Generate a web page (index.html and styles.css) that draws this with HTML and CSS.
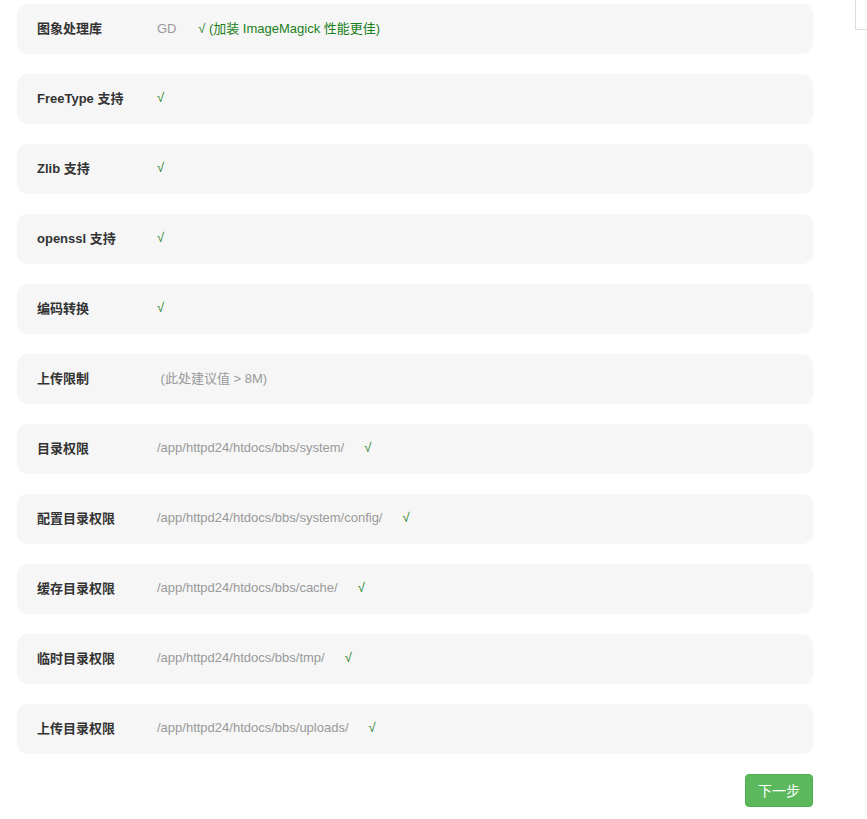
FILE: index.html
```html
<!DOCTYPE html>
<html lang="zh-CN">

<head>
    <meta charset="UTF-8">
    <title>环境检测</title>
    <link rel="stylesheet" href="styles.css">
</head>

<body>

    <div class="side-box"></div>

    <div class="check-list">
        <div class="row">
            <div class="label">图象处理库</div>
            <div class="value">GD&nbsp;&nbsp;&nbsp;&nbsp;&nbsp; <span class="ok">√ (加装 ImageMagick 性能更佳)</span></div>
        </div>
        <div class="row">
            <div class="label">FreeType 支持</div>
            <div class="value"><span class="ok">√</span></div>
        </div>
        <div class="row">
            <div class="label">Zlib 支持</div>
            <div class="value"><span class="ok">√</span></div>
        </div>
        <div class="row">
            <div class="label">openssl 支持</div>
            <div class="value"><span class="ok">√</span></div>
        </div>
        <div class="row">
            <div class="label">编码转换</div>
            <div class="value"><span class="ok">√</span></div>
        </div>
        <div class="row">
            <div class="label">上传限制</div>
            <div class="value">&nbsp;(此处建议值 &gt; 8M)</div>
        </div>
        <div class="row">
            <div class="label">目录权限</div>
            <div class="value">/app/httpd24/htdocs/bbs/system/<span class="ok gap">√</span></div>
        </div>
        <div class="row">
            <div class="label">配置目录权限</div>
            <div class="value">/app/httpd24/htdocs/bbs/system/config/<span class="ok gap">√</span></div>
        </div>
        <div class="row">
            <div class="label">缓存目录权限</div>
            <div class="value">/app/httpd24/htdocs/bbs/cache/<span class="ok gap">√</span></div>
        </div>
        <div class="row">
            <div class="label">临时目录权限</div>
            <div class="value">/app/httpd24/htdocs/bbs/tmp/<span class="ok gap">√</span></div>
        </div>
        <div class="row">
            <div class="label">上传目录权限</div>
            <div class="value">/app/httpd24/htdocs/bbs/uploads/<span class="ok gap">√</span></div>
        </div>

        <div class="actions">
            <button class="button">下一步</button>
        </div>
    </div>

</body>

</html>
```

FILE: styles.css
```css
* {
    box-sizing: border-box;
}

body {
    margin: 0;
    padding: 4px 0 0 17px;
    font-family: "Liberation Sans", Arial, "Noto Sans CJK SC", sans-serif;
    font-size: 13px;
    background-color: #fff;
    color: #333;
}

.side-box {
    position: absolute;
    top: -1px;
    left: 855px;
    width: 30px;
    height: 31px;
    border: 1px solid #ddd;
}

.check-list {
    width: 796px;
    display: flex;
    flex-direction: column;
    gap: 20px;
}

.row {
    display: flex;
    align-items: center;
    height: 50px;
    padding: 0 20px 4px;
    background-color: #f6f6f6;
    border-radius: 10px;
}

.label {
    width: 120px;
    flex-shrink: 0;
    font-weight: bold;
    color: #333;
}

.value {
    color: #999;
}

.ok {
    color: #1a801a;
}

.gap {
    margin-left: 20px;
}

.actions {
    display: flex;
    justify-content: flex-end;
}

.button {
    width: 68px;
    height: 33px;
    padding: 0 0 2px;
    background-color: #5cb85c;
    border: 1px solid #4cae4c;
    border-radius: 4px;
    color: #fff;
    font-family: inherit;
    font-size: 14px;
    cursor: pointer;
}
```
